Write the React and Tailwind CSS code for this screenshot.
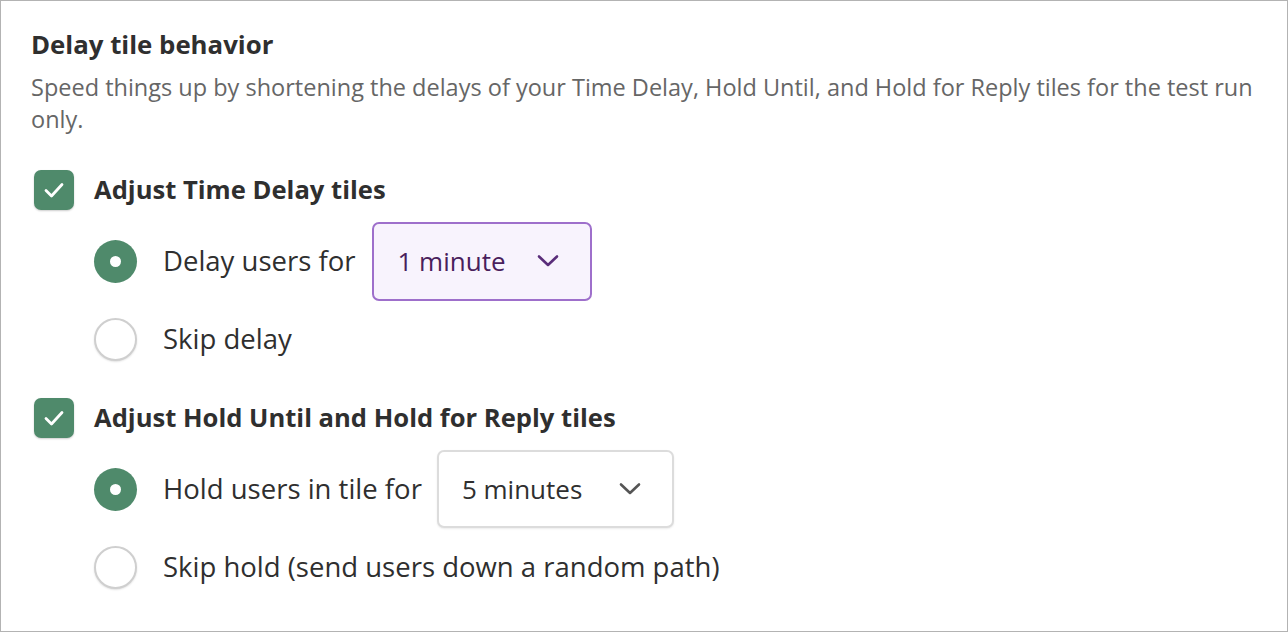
import React from "react";

function Chevron({ className }) {
  return (
    <svg width="24" height="14" viewBox="0 0 24 14" fill="none" className={className}>
      <path d="M3 2.5 L12 11 L21 2.5" stroke="currentColor" strokeWidth="2.6" strokeLinecap="round" strokeLinejoin="round" />
    </svg>
  );
}

function Checkbox() {
  return (
    <div className="w-[40px] h-[40px] rounded-[7px] bg-[#4f8a6b] flex items-center justify-center shadow-[0_1px_2px_rgba(0,0,0,0.2)] shrink-0">
      <svg width="22" height="18" viewBox="0 0 22 18" fill="none">
        <path d="M3 9.5 L8.5 15 L19 3.5" stroke="white" strokeWidth="2.8" strokeLinecap="round" strokeLinejoin="round" />
      </svg>
    </div>
  );
}

function Radio({ checked }) {
  if (checked) {
    return (
      <div className="w-[43px] h-[43px] rounded-full bg-[#4f8a6b] flex items-center justify-center shrink-0">
        <div className="w-[11px] h-[11px] rounded-full bg-white" />
      </div>
    );
  }
  return (
    <div className="w-[43px] h-[43px] rounded-full bg-white border-2 border-[#cfcfcf] shadow-[0_1px_2px_rgba(0,0,0,0.12)] shrink-0" />
  );
}

function Row({ checked, label, children }) {
  return (
    <div className="h-[78px] flex items-center pl-[63px]">
      <Radio checked={checked} />
      <span className="ml-[26px] text-[27.5px] text-[#2f2f2f]">{label}</span>
      {children}
    </div>
  );
}

export default function App() {
  return (
    <div
      className="w-[1288px] h-[632px] border border-[#b3b3b3] bg-white pl-[30px] pt-[27px] box-border"
      style={{ fontFamily: "'Open Sans', sans-serif" }}
    >
      <div className="text-[25.8px] leading-[32px] font-bold text-[#2f2f2f]">Delay tile behavior</div>
      <p className="mt-[11px] text-[23.5px] leading-[32px] text-[#666666] pr-[20px]">
        Speed things up by shortening the delays of your Time Delay, Hold Until, and Hold for Reply tiles for the test run only.
      </p>

      <div className="mt-[35px] flex items-center pl-[3px] h-[40px]">
        <Checkbox />
        <span className="ml-[20px] text-[25.6px] font-bold text-[#2f2f2f]">Adjust Time Delay tiles</span>
      </div>
      <div className="mt-[12px]">
        <Row checked label="Delay users for">
          <div className="ml-[17px] w-[220px] h-[79px] rounded-[7px] border-2 border-[#9e6fcb] bg-[#f8f3fd] flex items-center justify-between pl-[23px] pr-[30px] text-[26px] text-[#4a1e5c]">
            <span>1 minute</span>
            <Chevron className="text-[#5a2d7a]" />
          </div>
        </Row>
        <Row label="Skip delay" />
      </div>

      <div className="mt-[20px] flex items-center pl-[3px] h-[40px]">
        <Checkbox />
        <span className="ml-[20px] text-[25.6px] font-bold text-[#2f2f2f]">Adjust Hold Until and Hold for Reply tiles</span>
      </div>
      <div className="mt-[12px]">
        <Row checked label="Hold users in tile for">
          <div className="ml-[15px] w-[237px] h-[78px] rounded-[7px] border-2 border-[#dcdcdc] bg-white shadow-[0_1px_2px_rgba(0,0,0,0.08)] flex items-center justify-between pl-[23px] pr-[30px] text-[26px] text-[#2f2f2f]">
            <span>5 minutes</span>
            <Chevron className="text-[#555555]" />
          </div>
        </Row>
        <Row label="Skip hold (send users down a random path)" />
      </div>
    </div>
  );
}
